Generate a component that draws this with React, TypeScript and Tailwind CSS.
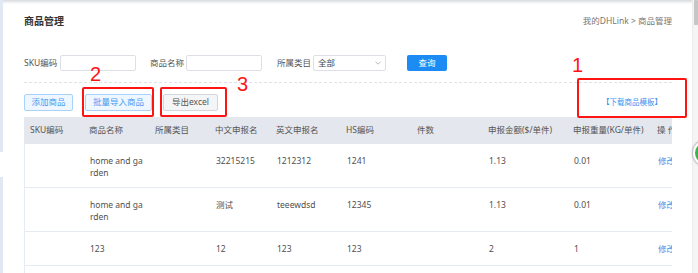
import React from "react";

interface Row {
  sku: string;
  name: string[];
  category: string;
  cnName: string;
  enName: string;
  hs: string;
  qty: string;
  amount: string;
  weight: string;
  h: string;
}

const rows: Row[] = [
  { sku: "", name: ["home and ga", "rden"], category: "", cnName: "32215215", enName: "1212312", hs: "1241", qty: "", amount: "1.13", weight: "0.01", h: "h-[44px]" },
  { sku: "", name: ["home and ga", "rden"], category: "", cnName: "测试", enName: "teeewdsd", hs: "12345", qty: "", amount: "1.13", weight: "0.01", h: "h-[44px]" },
  { sku: "", name: ["123"], category: "", cnName: "12", enName: "123", hs: "123", qty: "", amount: "2", weight: "1", h: "h-[34px]" },
  { sku: "", name: [], category: "", cnName: "", enName: "", hs: "", qty: "", amount: "", weight: "", h: "h-[34px]" },
];

// column widths (px), the last one is clipped by the table edge
const cols = ["w-[59px]", "w-[66px]", "w-[60px]", "w-[61px]", "w-[70px]", "w-[71px]", "w-[71px]", "w-[85px]", "w-[84px]", "w-[60px]"];

const headers = ["SKU编码", "商品名称", "所属类目", "中文申报名", "英文申报名", "HS编码", "件数", "申报金额($/单件)", "申报重量(KG/单件)", "操 作"];

function Cell({ i, children, className = "" }: { i: number; children?: React.ReactNode; className?: string }) {
  return <div className={`${cols[i]} shrink-0 pl-[6px] whitespace-nowrap ${className}`}>{children}</div>;
}

export default function App() {
  return (
    <div className="relative w-[698px] h-[273px] overflow-hidden bg-white flex text-[8.5px] text-[#555] font-['Noto_Sans','Noto_Sans_CJK_SC',sans-serif]">
      {/* left sidebar edge */}
      <div className="w-[3px] shrink-0 flex flex-col">
        <div className="h-[152px] bg-[#e2e8f3]" />
        <div className="h-[25px]" />
        <div className="flex-1 bg-[#e2e8f3]" />
      </div>

      {/* page */}
      <div className="relative flex-1 pl-[21px] pr-[20px]">
        <div className="absolute left-0 right-0 top-0 h-[4px] bg-linear-to-b from-[#d7dade] to-transparent" />

        <div className="pt-[15px] flex items-center justify-between h-[27px]">
          <span className="text-[10px] font-bold text-[#333] leading-[12px]">商品管理</span>
          <span className="text-[#777] leading-[12px]">我的DHLink &gt; 商品管理</span>
        </div>

        {/* filters */}
        <div className="mt-[28px] flex items-center h-[16px]">
          <span className="w-[36px]">SKU编码</span>
          <div className="w-[76px] h-[16px] border border-[#dcdfe6] rounded-[2px]" />
          <span className="ml-[14px] w-[36px]">商品名称</span>
          <div className="w-[76px] h-[16px] border border-[#dcdfe6] rounded-[2px]" />
          <span className="ml-[15px] w-[36px]">所属类目</span>
          <div className="w-[73px] h-[16px] border border-[#dcdfe6] rounded-[2px] flex items-center justify-between pl-[4px] pr-[4px] text-[#444]">
            <span>全部</span>
            <svg width="6" height="4" viewBox="0 0 6 4" fill="none">
              <path d="M0.5 0.8 L3 3.2 L5.5 0.8" stroke="#aaa" strokeWidth="0.8" />
            </svg>
          </div>
          <div className="ml-[21px] w-[40px] h-[16px] rounded-[2px] bg-[#1c8bf3] text-white flex items-center justify-center">查询</div>
        </div>

        <div className="mt-[11px] border-t border-dashed border-[#dfe2e8]" />

        {/* actions */}
        <div className="mt-[11px] flex items-center justify-between h-[17px]">
          <div className="flex items-center">
            <div className="w-[49px] h-[17px] rounded-[2px] border border-[#a9d2fb] bg-[#eef6ff] text-[#4a9af0] flex items-center justify-center">添加商品</div>
            <div className="ml-[12px] w-[67px] h-[17px] rounded-[2px] border border-[#a9d2fb] bg-[#eef6ff] text-[#4a9af0] flex items-center justify-center">批量导入商品</div>
            <div className="ml-[11px] w-[55px] h-[17px] rounded-[2px] border border-[#d3d6dc] bg-[#f4f5f7] text-[#555] flex items-center justify-center">导出excel</div>
          </div>
          <span className="mr-[10px] text-[7.5px] text-[#3b8ff0]">【下载商品模板】</span>
        </div>

        {/* table */}
        <div className="mt-[6px] w-[648px] overflow-hidden">
          <div className="flex items-center h-[27px] bg-[#e4e7ed] text-[#555]">
            {headers.map((h, i) => (
              <Cell key={h} i={i}>{h}</Cell>
            ))}
          </div>
          {rows.map((r, idx) => (
            <div key={idx} className={`flex items-start ${r.h} pt-[11px] leading-[12px] border-b border-l border-[#e6eaf2] text-[#4f4f4f]`}>
              <Cell i={0}>{r.sku}</Cell>
              <Cell i={1}>
                {r.name.map((n) => (
                  <div key={n}>{n}</div>
                ))}
              </Cell>
              <Cell i={2}>{r.category}</Cell>
              <Cell i={3}>{r.cnName}</Cell>
              <Cell i={4}>{r.enName}</Cell>
              <Cell i={5}>{r.hs}</Cell>
              <Cell i={6}>{r.qty}</Cell>
              <Cell i={7}>{r.amount}</Cell>
              <Cell i={8}>{r.weight}</Cell>
              <Cell i={9} className="text-[#4a90e8]">{r.name.length > 0 ? "修改" : ""}</Cell>
            </div>
          ))}
        </div>
      </div>

      {/* scrollbar */}
      <div className="w-[6px] shrink-0 bg-[#f5f5f5] border-l border-[#ececec]">
        <div className="ml-[1px] w-[4px] h-[25px] bg-[#c6c6c6] rounded-[1px]" />
      </div>

      {/* floating button, mostly off screen */}
      <div className="absolute left-[693px] top-[140px] w-[26px] h-[26px] rounded-full bg-[#43b14b] border-2 border-white shadow-[0_0_2px_1px_rgba(0,0,0,0.25)]" />

      {/* red annotations */}
      <div className="absolute left-[82px] top-[87px] w-[72px] h-[30px] border-[2.5px] border-[#ff1414] rounded-[2px]" />
      <div className="absolute left-[160px] top-[87px] w-[67px] h-[30px] border-[2.5px] border-[#ff1414] rounded-[2px]" />
      <div className="absolute left-[577px] top-[78px] w-[110px] h-[40px] border-[2.5px] border-[#ff1414] rounded-[2px]" />
      <span className="absolute left-[90px] top-[64px] text-[20px] leading-none text-[#ff1414] font-['Liberation_Sans',sans-serif]">2</span>
      <span className="absolute left-[237px] top-[74px] text-[20px] leading-none text-[#ff1414] font-['Liberation_Sans',sans-serif]">3</span>
      <span className="absolute left-[572px] top-[55px] text-[20px] leading-none text-[#ff1414] font-['Liberation_Sans',sans-serif]">1</span>
    </div>
  );
}
